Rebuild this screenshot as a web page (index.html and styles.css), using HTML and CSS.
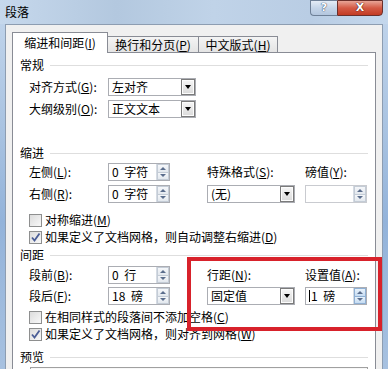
FILE: index.html
```html
<!DOCTYPE html>
<html lang="zh-CN">
<head>
    <meta charset="UTF-8">
    <title>段落</title>
    <link rel="stylesheet" href="styles.css">
</head>
<body>
    <div class="window">
        <div class="titlebar">
            <span class="title">段落</span>
            <div class="caption-btns">
                <span class="btn-help">?</span>
                <span class="btn-close">X</span>
            </div>
        </div>

        <div class="client">
            <div class="tabs">
                <div class="tab active tab-1">缩进和间距(<u>I</u>)</div>
                <div class="tab tab-2">换行和分页(<u>P</u>)</div>
                <div class="tab tab-3">中文版式(<u>H</u>)</div>
            </div>

            <div class="panel">
                <!-- 常规 -->
                <div class="group-title">常规</div>
                <div class="general">
                    <span class="label">对齐方式(<u>G</u>):</span>
                    <div class="combo"><span class="combo-val">左对齐</span><span class="combo-btn"></span></div>
                    <span class="label">大纲级别(<u>O</u>):</span>
                    <div class="combo"><span class="combo-val">正文文本</span><span class="combo-btn"></span></div>
                </div>

                <!-- 缩进 -->
                <div class="group-title indent-title">缩进</div>
                <div class="grid4 indent-grid">
                    <span class="label">左侧(<u>L</u>):</span>
                    <div class="spin"><span class="spin-val">0 字符</span><span class="spin-btns"><i class="up"></i><i class="down"></i></span></div>
                    <span class="label">特殊格式(<u>S</u>):</span>
                    <span class="label">磅值(<u>Y</u>):</span>

                    <span class="label">右侧(<u>R</u>):</span>
                    <div class="spin"><span class="spin-val">0 字符</span><span class="spin-btns"><i class="up"></i><i class="down"></i></span></div>
                    <div class="combo"><span class="combo-val">(无)</span><span class="combo-btn"></span></div>
                    <div class="spin disabled"><span class="spin-val"></span><span class="spin-btns"><i class="up"></i><i class="down"></i></span></div>
                </div>

                <div class="check check-first"><span class="box"></span><span>对称缩进(<u>M</u>)</span></div>
                <div class="check"><span class="box"><svg width="11" height="11" viewBox="0 0 11 11"><path d="M2 5.5 L4.5 8.5 L9.5 1.5" stroke="#4a5d96" stroke-width="1.8" fill="none"/></svg></span><span>如果定义了文档网格，则自动调整右缩进(<u>D</u>)</span></div>

                <!-- 间距 -->
                <div class="group-title spacing-title">间距</div>
                <div class="grid4 spacing-grid">
                    <span class="label">段前(<u>B</u>):</span>
                    <div class="spin"><span class="spin-val">0 行</span><span class="spin-btns"><i class="up"></i><i class="down"></i></span></div>
                    <span class="label">行距(<u>N</u>):</span>
                    <span class="label">设置值(<u>A</u>):</span>

                    <span class="label">段后(<u>F</u>):</span>
                    <div class="spin"><span class="spin-val">18 磅</span><span class="spin-btns"><i class="up"></i><i class="down"></i></span></div>
                    <div class="combo"><span class="combo-val">固定值</span><span class="combo-btn"></span></div>
                    <div class="spin focused"><span class="spin-val"><span class="caret"></span>1 磅</span><span class="spin-btns"><i class="up"></i><i class="down"></i></span></div>
                </div>

                <div class="check check-second"><span class="box"></span><span>在相同样式的段落间不添加空格(<u>C</u>)</span></div>
                <div class="check"><span class="box"><svg width="11" height="11" viewBox="0 0 11 11"><path d="M2 5.5 L4.5 8.5 L9.5 1.5" stroke="#4a5d96" stroke-width="1.8" fill="none"/></svg></span><span>如果定义了文档网格，则对齐到网格(<u>W</u>)</span></div>

                <!-- 预览 -->
                <div class="group-title preview-title">预览</div>
                <div class="preview"></div>
            </div>
        </div>

        <div class="highlight"></div>
    </div>
</body>
</html>
```

FILE: styles.css
```css
* {
    box-sizing: border-box;
}

body {
    margin: 0;
    width: 388px;
    height: 369px;
    overflow: hidden;
    font-family: "Noto Sans CJK SC", "Noto Sans", sans-serif;
    font-size: 12px;
    color: #000;
    text-autospace: no-autospace;
}

u {
    text-decoration-thickness: 1px;
    text-underline-offset: 1px;
}

.window {
    position: relative;
    width: 388px;
    height: 369px;
    overflow: hidden;
    display: flex;
    flex-direction: column;
    padding: 0 5px;
    background: linear-gradient(to bottom, #c3d6ec 0%, #a9c3e1 35%, #93b3da 60%, #a7c1e0 100%);
}

/* title bar */
.titlebar {
    height: 24px;
    margin: 0 -5px;
    padding: 0 5px;
    display: flex;
    justify-content: space-between;
    align-items: flex-start;
    background: linear-gradient(to right, #c6d8ec 0%, #b3c8df 30%, #c0d3e8 55%, #b9cde4 80%, #c4d7ec 100%);
}

.title {
    line-height: 16px;
    padding-top: 4px;
}

.caption-btns {
    display: flex;
    height: 16px;
}

.btn-help {
    width: 27px;
    height: 16px;
    border: 1px solid #6e8097;
    border-right: none;
    border-radius: 0 0 0 4px;
    background: linear-gradient(to bottom, #e4ecf6, #c5d5e8 50%, #b3c6de);
    color: #fff;
    font: bold 11px/14px "DejaVu Sans", sans-serif;
    text-align: center;
    text-shadow: 0 0 1px #2c3e5c, 0 0 1px #2c3e5c;
}

.btn-close {
    width: 46px;
    height: 16px;
    border: 1px solid #6b2f2a;
    border-radius: 0 0 4px 0;
    background: linear-gradient(to bottom, #e8a597, #d45a45 50%, #c23b24);
    color: #fff;
    font: bold 11px/14px "DejaVu Sans", sans-serif;
    text-align: center;
    text-shadow: 0 0 1px #3b0c06, 0 0 1px #3b0c06;
}

/* client area */
.client {
    flex: 1;
    min-height: 0;
    display: flex;
    flex-direction: column;
    background: #f0f0f0;
    border: 1px solid #8d9db1;
    border-bottom: none;
    padding: 7px 6px 0;
}

.tabs {
    display: flex;
    align-items: flex-end;
    height: 20px;
    flex: none;
}

.tab {
    height: 16px;
    line-height: 15px;
    text-align: center;
    border: 1px solid #898c95;
    border-bottom: none;
    background: linear-gradient(to bottom, #f4f4f4, #e4e4e4);
    margin-left: -1px;
}

.tab.active {
    position: relative;
    z-index: 1;
    height: 21px;
    line-height: 19px;
    margin-bottom: -1px;
    margin-left: 0;
    background: #fff;
}

.tab-1 {
    width: 96px;
}

.tab-2 {
    width: 92px;
}

.tab-3 {
    width: 80px;
}

.panel {
    flex: 1;
    min-height: 0;
    overflow: hidden;
    background: #fff;
    border: 1px solid #898c95;
    border-bottom: none;
    padding: 4px 7px 0;
}

/* group header with rule */
.group-title {
    display: flex;
    align-items: center;
    height: 16px;
    line-height: 16px;
}

.group-title::after {
    content: "";
    flex: 1;
    height: 1px;
    margin-left: 6px;
    background: #dedede;
}

.indent-title {
    margin-top: 27px;
}

.spacing-title {
    margin-top: 2px;
}

.preview-title {
    margin-top: 7px;
}

.label {
    line-height: 18px;
    white-space: nowrap;
}

.general {
    margin-top: 5px;
    padding-left: 9px;
    display: grid;
    grid-template-columns: 79px 88px;
    grid-auto-rows: 18px;
    row-gap: 4px;
    align-items: center;
}

.grid4 {
    padding-left: 9px;
    display: grid;
    grid-template-columns: 79px 99px 98px 62px;
    grid-auto-rows: 18px;
    align-items: center;
}

.grid4 .spin {
    width: 62px;
}

.grid4 .combo {
    width: 88px;
}

.indent-grid {
    margin-top: 2px;
    row-gap: 4px;
}

.spacing-grid {
    margin-top: 3px;
    row-gap: 3px;
}

/* combo box */
.combo {
    display: flex;
    height: 18px;
    border: 1px solid #abadb3;
    background: #fff;
}

.combo-val {
    flex: 1;
    padding-left: 3px;
    line-height: 16px;
    white-space: nowrap;
}

.combo-btn {
    width: 14px;
    border: 1px solid #7b7b7b;
    box-shadow: inset 0 0 0 1px #fcfcfc;
    background: linear-gradient(to bottom, #f6f6f6, #dadada);
    display: flex;
    align-items: center;
    justify-content: center;
}

.combo-btn::before {
    content: "";
    border-left: 3.5px solid transparent;
    border-right: 3.5px solid transparent;
    border-top: 4px solid #000;
}

/* spinner */
.spin {
    display: flex;
    height: 18px;
    border: 1px solid #abadb3;
    background: #fff;
}

.spin.disabled {
    border-color: #c9cbd0;
}

.spin-val {
    flex: 1;
    display: flex;
    align-items: center;
    padding-left: 3px;
    line-height: 16px;
    white-space: pre;
    word-spacing: 3px;
}

.caret {
    width: 1px;
    height: 12px;
    background: #000;
    margin-right: 1px;
}

.spin-btns {
    width: 13px;
    display: flex;
    flex-direction: column;
    border-left: 1px solid #d5dbe3;
}

.spin-btns i {
    flex: 1;
    display: flex;
    align-items: center;
    justify-content: center;
    background: linear-gradient(to bottom, #f5f7fa, #e3e8ee);
    border: 1px solid #c4ccd6;
}

.spin-btns i + i {
    border-top: none;
}

.spin.focused .spin-btns i {
    background: linear-gradient(to bottom, #e8f2fb, #c6dcf2);
    border-color: #8fb0d4;
}

.spin-btns .up::before {
    content: "";
    border-left: 3px solid transparent;
    border-right: 3px solid transparent;
    border-bottom: 3px solid #5a6d8c;
}

.spin-btns .down::before {
    content: "";
    border-left: 3px solid transparent;
    border-right: 3px solid transparent;
    border-top: 3px solid #5a6d8c;
}

/* checkboxes */
.check {
    display: flex;
    align-items: center;
    gap: 3px;
    height: 16px;
    line-height: 16px;
    padding-left: 9px;
    margin-top: 1px;
    white-space: nowrap;
}

.check-first {
    margin-top: 9px;
}

.check-second {
    margin-top: 4px;
}

.box {
    width: 13px;
    height: 13px;
    flex: none;
    display: flex;
    align-items: center;
    justify-content: center;
    border: 1px solid #8e8f8f;
    background: linear-gradient(135deg, #dcdcdc, #f8f8f8);
}

.preview {
    margin: 2px 0 0 10px;
    height: 2px;
    border: 1px solid #a0a0a0;
    border-bottom: none;
    background: #f7f7f7;
}

/* red annotation frame */
.highlight {
    position: absolute;
    left: 187px;
    top: 257px;
    width: 195px;
    height: 74px;
    border: 4px solid #d8222b;
    z-index: 5;
}
```
